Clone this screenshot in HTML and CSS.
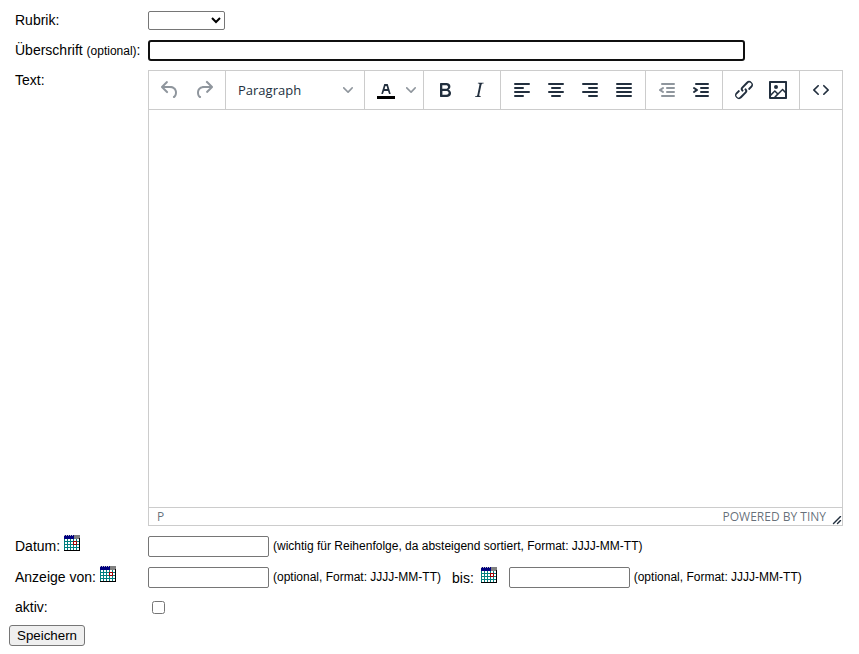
FILE: index.html
```html
<!DOCTYPE html>
<html lang="de">
<head>
<meta charset="UTF-8" />
<meta name="viewport" content="width=device-width, initial-scale=1" />
<title>Beitrag bearbeiten</title>
<link rel="stylesheet" href="styles.css">
</head>
<body>

<!-- calendar icon, used three times below -->
<svg class="sprite" aria-hidden="true">
  <symbol id="calendar" viewBox="0 0 16 16">
    <path fill="#fff" d="M0 0h16v16H0z"/>
    <path fill="#008080" d="M0 3h1v12H0zM3 4h1v11H3zM6 4h1v11H6zM9 4h1v11H9zM12 4h1v11h-1zM0 6h15v1H0zM0 9h15v1H0zM0 12h15v1H0z"/>
    <path fill="#000080" d="M0 0h10v4H0z"/>
    <path fill="#808080" d="M10 0h6v4h-6z"/>
    <path fill="#c0c0c0" d="M0 0h1v1H0zM2 0h1v1H2zM4 0h1v1H4zM6 0h1v1H6zM8 0h1v1H8z"/>
    <path fill="#fff" d="M10 7h2v2h-2z"/>
    <path fill="#a00000" d="M9 6h4v4H9zm1 1v2h2V7z" fill-rule="evenodd"/>
    <path fill="#000" d="M15 3h1v13H0v-1h15z"/>
  </symbol>
</svg>

<form class="entry">
  <div class="fields">
    <label for="rubrik">Rubrik:</label>
    <div class="field">
      <select id="rubrik" class="rubrik"><option></option></select>
    </div>

    <label for="title">Überschrift <small>(optional)</small>:</label>
    <div class="field">
      <input type="text" id="title" class="title">
    </div>

    <label for="text">Text:</label>
    <div class="editor">
      <div class="toolbar">
        <div class="group">
          <button type="button" disabled aria-label="Rückgängig"><svg viewBox="0 0 24 24"><path d="M6.4 8H12c3.7 0 6.2 2 6.8 5.1.6 2.7-.4 5.6-2.3 6.8a1 1 0 01-1-1.8c1.1-.6 1.8-2.7 1.4-4.6-.5-2.1-2.1-3.5-4.9-3.5H6.4l3.3 3.3a1 1 0 11-1.4 1.4l-5-5a1 1 0 010-1.4l5-5a1 1 0 011.4 1.4L6.4 8z"/></svg></button>
          <button type="button" disabled aria-label="Wiederholen"><svg viewBox="0 0 24 24"><path d="M17.6 10H12c-2.8 0-4.4 1.4-4.9 3.5-.4 2 .3 4 1.4 4.6a1 1 0 11-1 1.8c-2-1.2-2.9-4.1-2.3-6.8.6-3 3-5.1 6.8-5.1h5.6l-3.3-3.3a1 1 0 111.4-1.4l5 5a1 1 0 010 1.4l-5 5a1 1 0 01-1.4-1.4l3.3-3.3z"/></svg></button>
        </div>
        <div class="group">
          <button type="button" class="format">Paragraph <svg class="chevron" viewBox="0 0 10 10"><path d="M8.7 2.2c.3-.3.8-.3 1 0 .4.4.4.9 0 1.2L5.7 7.8c-.3.3-.9.3-1.2 0L.2 3.4a.8.8 0 010-1.2c.3-.3.8-.3 1.1 0L5 6l3.7-3.8z"/></svg></button>
        </div>
        <div class="group">
          <button type="button" aria-label="Textfarbe"><svg viewBox="0 0 24 24"><path fill="#000" d="M3 18h18v3H3z"/><path d="M8.7 16h-.8a.5.5 0 01-.5-.6l2.7-9c.1-.3.3-.4.5-.4h2.8c.2 0 .4.1.5.4l2.7 9a.5.5 0 01-.5.6h-.8a.5.5 0 01-.4-.4l-.7-2.2c0-.3-.3-.4-.5-.4h-3.4c-.2 0-.4.1-.5.4l-.7 2.2c0 .3-.2.4-.4.4zm2.6-7.6l-.6 2a.5.5 0 00.5.6h1.6a.5.5 0 00.5-.6l-.6-2c0-.3-.3-.4-.5-.4h-.4c-.2 0-.4.1-.5.4z"/></svg></button>
          <button type="button" class="narrow" aria-label="Farbe wählen"><svg class="chevron" viewBox="0 0 10 10"><path d="M8.7 2.2c.3-.3.8-.3 1 0 .4.4.4.9 0 1.2L5.7 7.8c-.3.3-.9.3-1.2 0L.2 3.4a.8.8 0 010-1.2c.3-.3.8-.3 1.1 0L5 6l3.7-3.8z"/></svg></button>
        </div>
        <div class="group">
          <button type="button" aria-label="Fett"><svg viewBox="0 0 24 24"><path d="M7.8 19c-.3 0-.5 0-.6-.2l-.2-.5V5.7c0-.2 0-.4.2-.5l.6-.2h5c1.5 0 2.7.3 3.5 1 .7.6 1.1 1.4 1.1 2.5a3 3 0 01-.6 1.9c-.4.6-1 1-1.6 1.2.4.1.9.3 1.3.6s.8.7 1 1.2c.4.4.5 1 .5 1.6 0 1.3-.4 2.3-1.3 3-.8.7-2.1 1-3.8 1H7.8zm5-8.3c.6 0 1.2-.1 1.6-.5.4-.3.6-.7.6-1.3 0-1.1-.8-1.7-2.3-1.7H9.3v3.5h3.4zm.5 6c.7 0 1.3-.1 1.7-.4.4-.4.6-.9.6-1.5s-.2-1-.7-1.4c-.4-.3-1-.4-2-.4H9.4v3.8h4z"/></svg></button>
          <button type="button" aria-label="Kursiv"><svg viewBox="0 0 24 24"><path d="M16.7 4.7l-.1.9h-.3c-.6 0-1 0-1.4.3-.3.3-.4.6-.5 1.1l-2.1 9.8v.6c0 .5.4.8 1.4.8h.2l-.2.8H8l.2-.8h.2c1.1 0 1.8-.5 2-1.5l2-9.8.1-.5c0-.6-.4-.8-1.4-.8h-.3l.2-.9h5.8z"/></svg></button>
        </div>
        <div class="group">
          <button type="button" aria-label="Linksbündig"><svg viewBox="0 0 24 24"><path d="M5 5h14a1 1 0 010 2H5a1 1 0 010-2zm0 4h8a1 1 0 010 2H5a1 1 0 010-2zm0 4h14a1 1 0 010 2H5a1 1 0 010-2zm0 4h8a1 1 0 010 2H5a1 1 0 010-2z"/></svg></button>
          <button type="button" aria-label="Zentriert"><svg viewBox="0 0 24 24"><path d="M5 5h14a1 1 0 010 2H5a1 1 0 010-2zm3 4h8a1 1 0 010 2H8a1 1 0 010-2zm-3 4h14a1 1 0 010 2H5a1 1 0 010-2zm3 4h8a1 1 0 010 2H8a1 1 0 010-2z"/></svg></button>
          <button type="button" aria-label="Rechtsbündig"><svg viewBox="0 0 24 24"><path d="M5 5h14a1 1 0 010 2H5a1 1 0 010-2zm6 4h8a1 1 0 010 2h-8a1 1 0 010-2zm-6 4h14a1 1 0 010 2H5a1 1 0 010-2zm6 4h8a1 1 0 010 2h-8a1 1 0 010-2z"/></svg></button>
          <button type="button" aria-label="Blocksatz"><svg viewBox="0 0 24 24"><path d="M5 5h14a1 1 0 010 2H5a1 1 0 010-2zm0 4h14a1 1 0 010 2H5a1 1 0 010-2zm0 4h14a1 1 0 010 2H5a1 1 0 010-2zm0 4h14a1 1 0 010 2H5a1 1 0 010-2z"/></svg></button>
        </div>
        <div class="group">
          <button type="button" disabled aria-label="Einzug verkleinern"><svg viewBox="0 0 24 24"><path d="M7 5h12a1 1 0 010 2H7a1 1 0 010-2zm5 4h7a1 1 0 010 2h-7a1 1 0 010-2zm0 4h7a1 1 0 010 2h-7a1 1 0 010-2zm-5 4h12a1 1 0 010 2H7a1 1 0 010-2zm1.600-3.800a1 1 0 01-1.200 1.600l-3-2a1 1 0 010-1.600l3-2a1 1 0 011.200 1.600L6.800 12l1.800 1.200z"/></svg></button>
          <button type="button" aria-label="Einzug vergrößern"><svg viewBox="0 0 24 24"><path d="M7 5h12a1 1 0 010 2H7a1 1 0 010-2zm5 4h7a1 1 0 010 2h-7a1 1 0 010-2zm0 4h7a1 1 0 010 2h-7a1 1 0 010-2zm-5 4h12a1 1 0 010 2H7a1 1 0 010-2zm-2.600-3.800L6.200 12l-1.800-1.200a1 1 0 011.200-1.600l3 2a1 1 0 010 1.600l-3 2a1 1 0 11-1.200-1.600z"/></svg></button>
        </div>
        <div class="group">
          <button type="button" aria-label="Link"><svg viewBox="0 0 24 24"><path d="M6.2 12.3a1 1 0 011.4 1.400l-2.100 2a2 2 0 102.700 2.800l4.800-4.800a1 1 0 000-1.400 1 1 0 111.400-1.300 2.900 2.900 0 010 4L9.600 20a3.900 3.900 0 01-5.500-5.500l2-2zm11.600-.6a1 1 0 01-1.400-1.400l2-2a2 2 0 10-2.600-2.800L11 10.300a1 1 0 000 1.400A1 1 0 119.600 13a2.900 2.900 0 010-4L14.400 4a3.900 3.900 0 015.500 5.500l-2 2z"/></svg></button>
          <button type="button" aria-label="Bild"><svg viewBox="0 0 24 24"><path fill-rule="evenodd" d="M5 15.7l3.300-3.200c.3-.3.7-.3 1 0L12 15l4.100-4c.3-.4.8-.4 1 0l2 1.900V5H5v10.700zM5 18v1h3l2.800-2.900-2-2L5 17.900zm14-3l-2.500-2.400-6.400 6.500H19v-4zM4 3h16c.6 0 1 .4 1 1v16c0 .6-.4 1-1 1H4a1 1 0 01-1-1V4c0-.6.4-1 1-1zm6 8a2 2 0 100-4 2 2 0 000 4z"/></svg></button>
        </div>
        <div class="group">
          <button type="button" aria-label="Quelltext"><svg viewBox="0 0 24 24"><path d="M9.8 15.7c.3.3.3.8 0 1-.3.4-.9.4-1.200 0l-4.400-4.100a.8.8 0 010-1.200l4.400-4.200c.3-.3.9-.3 1.200 0 .3.3.3.8 0 1.100L6 12l3.800 3.700zM14.200 15.700c-.3.3-.3.8 0 1 .4.4.9.4 1.200 0l4.400-4.100c.3-.3.3-.8 0-1.200l-4.400-4.200a.8.8 0 00-1.200 0c-.3.3-.3.8 0 1.100L18 12l-3.800 3.700z"/></svg></button>
        </div>
      </div>
      <textarea id="text" class="content"></textarea>
      <div class="statusbar">
        <span class="path">P</span>
        <a href="#">POWERED BY TINY</a>
        <svg class="resize" viewBox="0 0 10 10"><path d="M8.100 1.100A.5.5 0 119 2l-7 7A.5.5 0 111 8l7-7zM8.100 5.100A.5.5 0 119 6l-3 3A.5.5 0 115 8l3-3z"/></svg>
      </div>
    </div>

    <label for="datum">Datum: <svg class="calendar"><use href="#calendar"/></svg></label>
    <div class="field date-row">
      <input type="text" id="datum" class="date">
      <small>(wichtig für Reihenfolge, da absteigend sortiert, Format: JJJJ-MM-TT)</small>
    </div>

    <label for="von">Anzeige von: <svg class="calendar"><use href="#calendar"/></svg></label>
    <div class="field date-row">
      <input type="text" id="von" class="date">
      <small>(optional, Format: JJJJ-MM-TT)</small>
      <label for="bis" class="until">bis: <svg class="calendar"><use href="#calendar"/></svg></label>
      <input type="text" id="bis" class="date">
      <small>(optional, Format: JJJJ-MM-TT)</small>
    </div>

    <label for="aktiv">aktiv:</label>
    <div class="field">
      <input type="checkbox" id="aktiv" class="active">
    </div>
  </div>
  <button type="submit" class="save">Speichern</button>
</form>

</body>
</html>
```
FILE: styles.css
```css
body {
  margin: 0;
  background: #fff;
  color: #000;
  font-family: "Liberation Sans", Arial, sans-serif;
  font-size: 14px;
}
.sprite {
  display: none;
}
.entry {
  padding: 10px 16px 8px 9px;
}
.fields {
  display: grid;
  grid-template-columns: 133px minmax(0, 1fr);
  row-gap: 9px;
  align-items: start;
  padding-left: 6px;
  margin-bottom: 7px;
}
label {
  white-space: nowrap;
  line-height: 20px;
}
small {
  font-size: 12px;
}
.field {
  display: flex;
  align-items: center;
  min-height: 21px;
}
.date-row {
  min-height: 22px;
  gap: 4px;
}
input[type="text"] {
  box-sizing: border-box;
  height: 21px;
  border: 1px solid #767676;
  border-radius: 2px;
  padding: 1px 2px;
  font-family: inherit;
  outline: none;
}
input.title {
  flex: 0 1 597px;
  border: 2px solid #101010;
  border-radius: 3px;
}
.rubrik {
  width: 77px;
  height: 19px;
  border: 1px solid #767676;
  border-radius: 2px;
  background: #fff;
  font-family: inherit;
}
.date {
  width: 121px;
}
.until {
  margin: 0 8px 0 7px;
}
.calendar {
  width: 16px;
  height: 16px;
  shape-rendering: crispEdges;
}
.until .calendar {
  margin-left: 3px;
}
.active {
  width: 13px;
  height: 13px;
  margin: 0 4px;
}

/* editor */
.editor {
  border: 1px solid #ccc;
}
.toolbar {
  display: flex;
  flex-wrap: wrap;
  border-bottom: 1px solid #ccc;
}
.group {
  display: flex;
  padding: 2px 4px;
  border-right: 1px solid #ccc;
}
.group:last-child {
  border-right: none;
}
.toolbar button {
  display: flex;
  align-items: center;
  justify-content: center;
  width: 34px;
  height: 34px;
  border: none;
  padding: 0;
  background: none;
  color: #222f3e;
}
.toolbar svg {
  width: 24px;
  height: 24px;
  fill: #222f3e;
}
.toolbar button:disabled svg {
  opacity: 0.5;
}
.toolbar button.format {
  justify-content: space-between;
  width: 130px;
  padding: 0 7px 0 8px;
  font-family: "Open Sans", "Segoe UI", sans-serif;
  font-size: 13px;
}
.toolbar button.narrow {
  width: 16px;
}
.toolbar .chevron {
  width: 10px;
  height: 10px;
  opacity: 0.5;
}
.content {
  display: block;
  box-sizing: border-box;
  width: 100%;
  height: 397px;
  border: none;
  padding: 16px;
  font: inherit;
  resize: none;
  outline: none;
}
.statusbar {
  display: flex;
  align-items: center;
  height: 17px;
  border-top: 1px solid #ccc;
  padding-left: 8px;
  color: #222f3eb3;
  font-family: "Open Sans", "Segoe UI", sans-serif;
  font-size: 12px;
  line-height: 18px;
}
.path {
  flex: 1;
}
.statusbar a {
  color: inherit;
  text-decoration: none;
}
.resize {
  align-self: flex-end;
  width: 10px;
  height: 10px;
  margin-left: 6px;
  fill: #222f3e;
}

.save {
  display: block;
  height: 21px;
  border: 1px solid #767676;
  border-radius: 3px;
  padding: 0 7px;
  background: #efefef;
  color: #000;
  font-family: inherit;
}
```
